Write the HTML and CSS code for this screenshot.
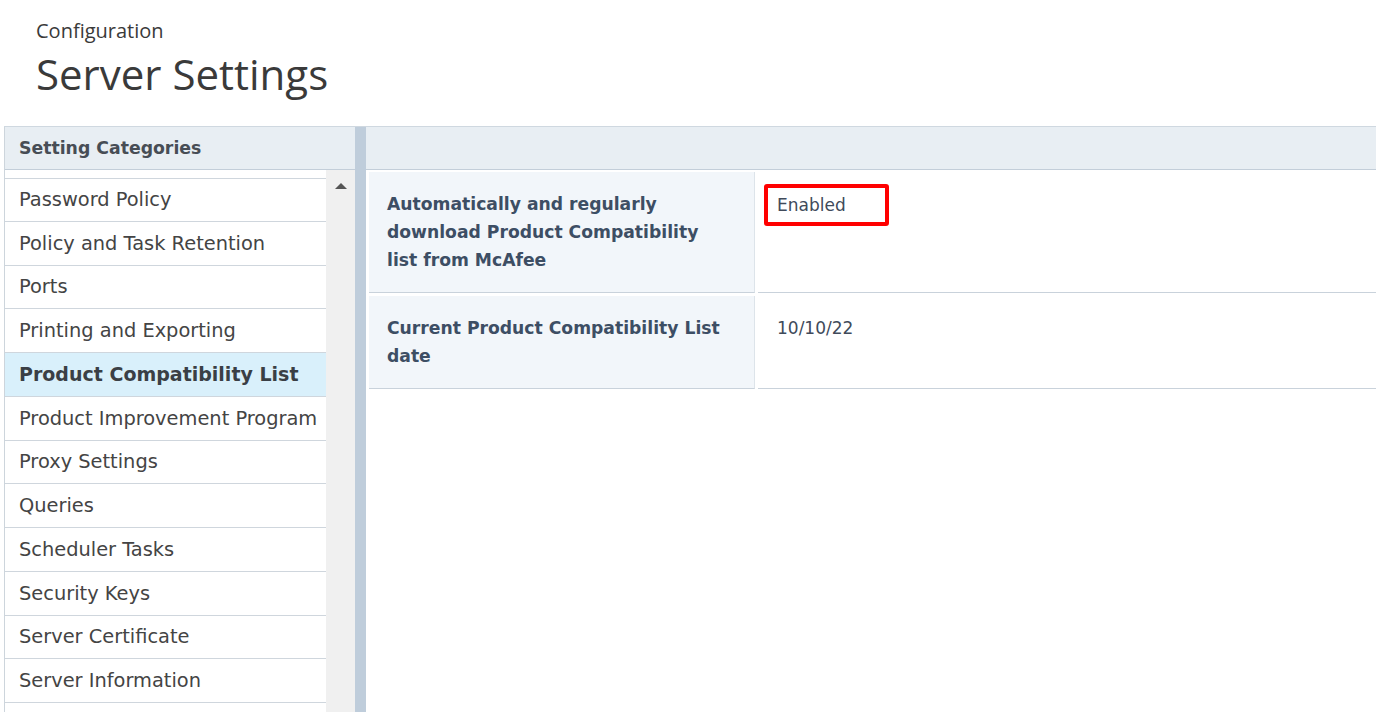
FILE: index.html
```html
<!DOCTYPE html>
<html>
<head>
<meta charset="utf-8">
<link rel="stylesheet" href="styles.css">
</head>
<body>
<header class="page-head">
  <div class="crumb">Configuration</div>
  <h1 class="title">Server Settings</h1>
</header>
<div class="panel">
  <aside class="side">
    <div class="side-head">Setting Categories</div>
    <div class="side-body">
      <ul class="cat-list">
        <li class="cat">Password Policy</li>
        <li class="cat">Policy and Task Retention</li>
        <li class="cat">Ports</li>
        <li class="cat">Printing and Exporting</li>
        <li class="cat selected">Product Compatibility List</li>
        <li class="cat">Product Improvement Program</li>
        <li class="cat">Proxy Settings</li>
        <li class="cat">Queries</li>
        <li class="cat">Scheduler Tasks</li>
        <li class="cat">Security Keys</li>
        <li class="cat">Server Certificate</li>
        <li class="cat">Server Information</li>
      </ul>
      <div class="scrollbar"><span class="arrow-up"></span></div>
    </div>
  </aside>
  <div class="splitter"></div>
  <main class="content">
    <div class="content-head"></div>
    <div class="settings">
      <div class="row">
        <div class="label">Automatically and regularly download Product Compatibility list from McAfee</div>
        <div class="value"><span class="highlight">Enabled</span></div>
      </div>
      <div class="row">
        <div class="label">Current Product Compatibility List date</div>
        <div class="value plain">10/10/22</div>
      </div>
    </div>
  </main>
</div>
</body>
</html>
```
FILE: styles.css
```css
html, body {
  margin: 0;
  padding: 0;
  background: #ffffff;
  height: 712px;
  overflow: hidden;
}
body {
  font-family: "DejaVu Sans", Verdana, sans-serif;
  color: #444;
}
.page-head {
  padding: 17px 0 0 36px;
  height: 126px;
  box-sizing: border-box;
}
.crumb {
  font-family: "Open Sans", sans-serif;
  font-size: 20px;
  line-height: 28px;
  color: #3a3a3a;
}
.title {
  margin: 0;
  font-family: "Open Sans", sans-serif;
  font-weight: 400;
  font-size: 42px;
  line-height: 58px;
  color: #3a3a3a;
}
.panel {
  margin-left: 4px;
  display: grid;
  grid-template-columns: 351px 11px 1fr;
  height: 586px;
  border-top: 1px solid #cfd8e0;
}
.side {
  border-left: 1px solid #cdd5dc;
  display: flex;
  flex-direction: column;
}
.side-head {
  height: 43px;
  box-sizing: border-box;
  background: #e8eef3;
  border-bottom: 1px solid #c3ced9;
  font-weight: bold;
  font-size: 17.3px;
  line-height: 42px;
  padding-left: 14px;
  color: #474d55;
}
.side-body {
  flex: 1;
  display: grid;
  grid-template-columns: 321px 29px;
}
.cat-list {
  list-style: none;
  margin: 0;
  padding: 8px 0 0 0;
  background: #fff;
}
.cat {
  height: 43.75px;
  box-sizing: border-box;
  border-bottom: 1px solid #cfd6dd;
  display: flex;
  align-items: center;
  padding-left: 14px;
  font-size: 19.4px;
  color: #444;
  white-space: nowrap;
}
.cat:first-child {
  border-top: 1px solid #cfd6dd;
}
.cat.selected {
  background: #d9f0fb;
  font-weight: bold;
  font-size: 19px;
  color: #3a3f45;
}
.scrollbar {
  background: #f0f0f0;
  display: flex;
  justify-content: center;
  padding-top: 13px;
  box-sizing: border-box;
}
.arrow-up {
  width: 0;
  height: 0;
  border-left: 6px solid transparent;
  border-right: 6px solid transparent;
  border-bottom: 6px solid #555;
}
.splitter {
  background: #bfcddb;
}
.content {
  display: flex;
  flex-direction: column;
}
.content-head {
  height: 43px;
  box-sizing: border-box;
  background: #e8eef3;
  border-bottom: 1px solid #c3ced9;
}
.settings {
  padding: 2px 0 0 3px;
  display: flex;
  flex-direction: column;
  gap: 3px;
}
.row {
  display: grid;
  grid-template-columns: 386px 1fr;
  column-gap: 3px;
}
.label {
  background: #f2f6fa;
  border-bottom: 1px solid #c9d2db;
  border-right: 1px solid #dde4ea;
  padding: 18px 26px 18px 18px;
  font-size: 17.2px;
  font-weight: bold;
  line-height: 28px;
  color: #3d4e64;
}
.value {
  border-bottom: 1px solid #c9d2db;
  padding: 12px 0 0 6px;
  font-size: 17px;
  line-height: 28px;
  color: #404a5a;
}
.value.plain {
  padding: 18px 0 0 19px;
}
.highlight {
  display: inline-block;
  border: 4px solid #ff0000;
  border-radius: 3px;
  padding: 3px 39px 3px 9px;
}
```
